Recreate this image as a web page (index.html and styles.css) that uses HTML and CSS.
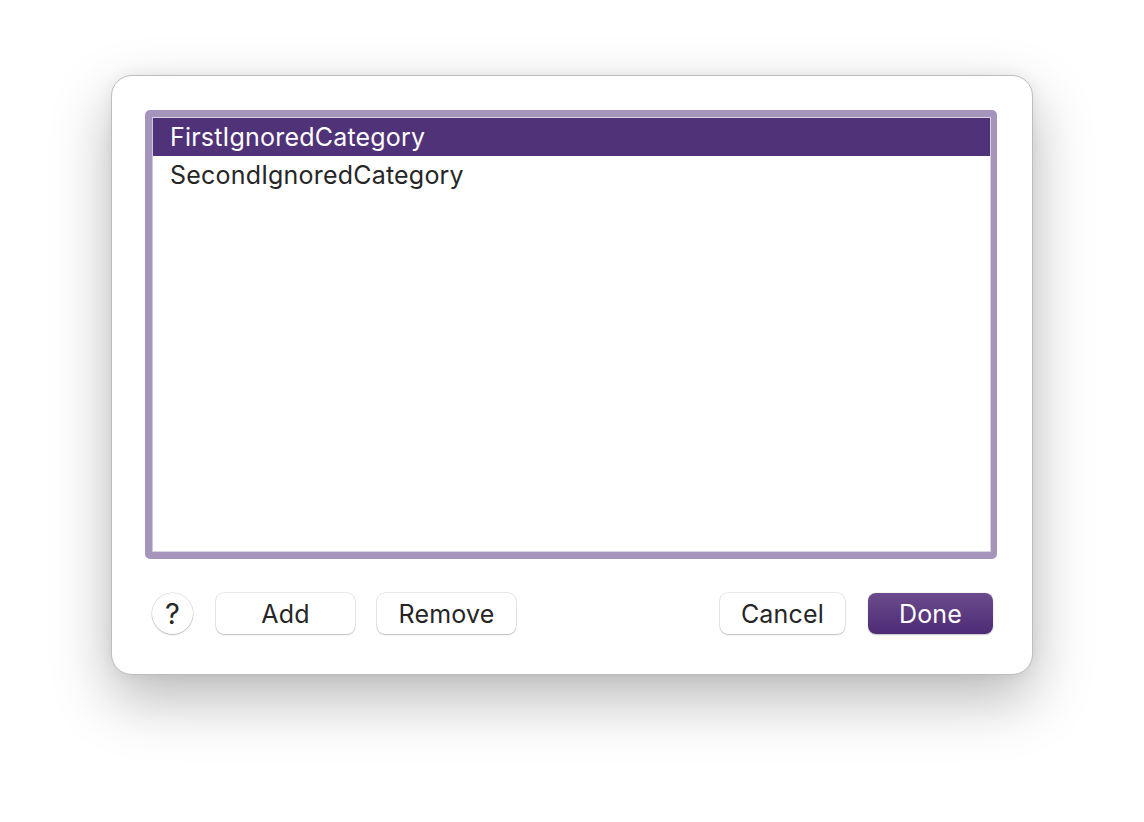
FILE: index.html
```html
<!DOCTYPE html>
<html>
<head>
<meta charset="utf-8">
<link rel="stylesheet" href="styles.css">
</head>
<body>
<div class="dialog">
  <div class="list">
    <div class="list-inner">
      <div class="row selected">FirstIgnoredCategory</div>
      <div class="row">SecondIgnoredCategory</div>
    </div>
  </div>
  <div class="buttons">
    <button class="help">?</button>
    <button class="btn w139">Add</button>
    <button class="btn w139">Remove</button>
    <div class="spacer"></div>
    <button class="btn w124">Cancel</button>
    <button class="btn w124 primary">Done</button>
  </div>
</div>
</body>
</html>
```

FILE: styles.css
```css
html, body {
  margin: 0;
  padding: 0;
  background: #ffffff;
}
body {
  width: 1144px;
  height: 822px;
  overflow: hidden;
  padding: 75px 0 0 111px;
  box-sizing: border-box;
  font-family: Inter, "Liberation Sans", Arial, sans-serif;
}
.dialog {
  width: 922px;
  height: 600px;
  box-sizing: border-box;
  background: #ffffff;
  border: 1px solid #bdbdbd;
  border-radius: 21px;
  box-shadow: 0 24px 60px rgba(0, 0, 0, 0.28), 0 0 14px rgba(0, 0, 0, 0.06);
  padding: 34px 34px 0 33px;
  display: flex;
  flex-direction: column;
}
.list {
  width: 852px;
  height: 449px;
  box-sizing: border-box;
  border: 7px solid #a595bd;
  border-right-width: 6px;
  border-radius: 5px;
  background: #ffffff;
}
.list-inner {
  height: 100%;
  box-sizing: border-box;
  border: 1px solid #d8d3df;
  border-left-color: #cfc8d9;
}
.row {
  height: 38px;
  line-height: 38px;
  padding-left: 17px;
  font-size: 25px;
  letter-spacing: 0.2px;
  color: #262626;
}
.row.selected {
  background: #4f3277;
  color: #ffffff;
}
.buttons {
  margin: 34px 5px 0 7px;
  display: flex;
  align-items: center;
  height: 41px;
}
.spacer { flex: 1; }
button {
  font-family: Inter, "Liberation Sans", Arial, sans-serif;
  font-size: 25px;
  letter-spacing: 0.2px;
  color: #262626;
  background: #ffffff;
  border: none;
  padding: 0;
  margin: 0;
  box-shadow: 0 0 0 0.5px rgba(0, 0, 0, 0.16), 0 1px 1.5px rgba(0, 0, 0, 0.2);
}
.help {
  width: 41px;
  height: 41px;
  border-radius: 50%;
  font-size: 29px;
  font-weight: 400;
  margin-right: 23px;
  padding-bottom: 1px;
}
.btn {
  height: 41px;
  border-radius: 8px;
}
.w139 { width: 139px; margin-right: 22px; }
.w124 { width: 125px; }
.w124 + .w124 { margin-left: 23px; }
.primary {
  background: linear-gradient(to bottom, #6b4b8c, #4e2b75);
  color: #ffffff;
  box-shadow: 0 0.5px 1.5px rgba(0, 0, 0, 0.25);
}
```
